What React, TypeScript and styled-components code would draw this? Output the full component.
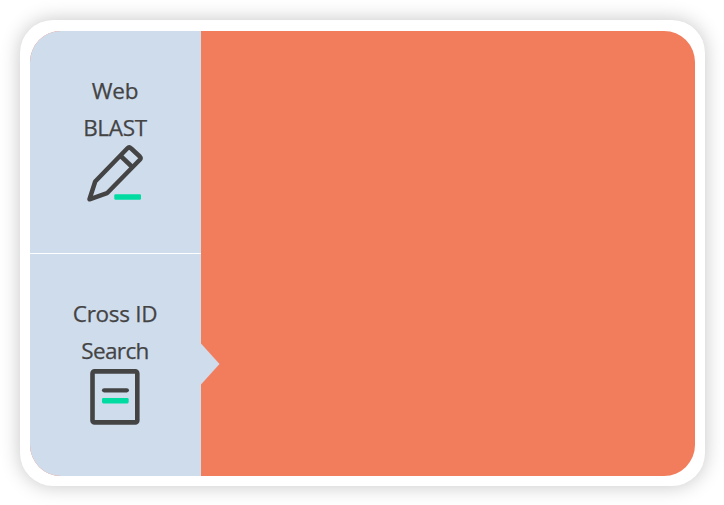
import React from 'react';
import styled, { createGlobalStyle } from 'styled-components';

const GlobalStyle = createGlobalStyle`
  * { box-sizing: border-box; }
  html, body { margin: 0; background: #fff; }
  body { overflow: hidden; }
`;

const Page = styled.main`
  width: 724px;
  height: 505px;
  padding: 20px 19px 19px 20px;
`;

const Card = styled.section`
  width: 685px;
  height: 466px;
  padding: 10.5px 10px 10.5px;
  border-radius: 33px;
  background: #fff;
  box-shadow: 0 0 20px rgba(0, 0, 0, 0.23);
`;

const Panel = styled.div`
  display: flex;
  height: 445px;
  border-radius: 31px;
  overflow: hidden;
  background: #f27d5c;
`;

const Tabs = styled.nav`
  display: flex;
  flex-direction: column;
  width: 171px;
`;

const Tab = styled.button<{ $divided?: boolean }>`
  position: relative;
  display: flex;
  flex-direction: column;
  align-items: center;
  height: ${(p) => (p.$divided ? '223px' : '222px')};
  padding: ${(p) => (p.$divided ? '41px' : '41.5px')} 1px 0 0;
  border: 0;
  border-bottom: ${(p) => (p.$divided ? '1px solid #fff' : '0')};
  background: #cfdcec;
  color: #444;
`;

const Line = styled.span<{ $spacing: number }>`
  height: 37.2px;
  font: 400 22.5px/37.2px "Open Sans", sans-serif;
  letter-spacing: ${(p) => p.$spacing}px;
  white-space: nowrap;
  -webkit-text-stroke: 0.25px #444;
`;

const Icon = styled.svg<{ $lift: number }>`
  display: block;
  width: 66px;
  height: 66px;
  margin-top: ${(p) => -p.$lift}px;
  margin-right: 1px;
  flex: none;
`;

const Arrow = styled.svg`
  position: absolute;
  left: 170.5px;
  top: 89px;
  width: 19px;
  height: 42px;
`;

const Content = styled.div`
  flex: 1;
`;

const PencilIcon = () => (
  <Icon $lift={6} viewBox="0 0 66 66" fill="none">
    <path
      d="M7.5 59.3 13.2 41.5 45.2 8.5Q47.2 6.5 49.2 8.5L57.8 16.5Q59.3 18 57.8 19.7L25 53.2Z"
      stroke="#444"
      strokeWidth="4.5"
      strokeLinejoin="round"
    />
    <path d="M38.7 16 49.7 26.5" stroke="#444" strokeWidth="4.5" />
    <rect x="32.3" y="54.2" width="26.7" height="5.6" rx="1.2" fill="#00dba2" />
  </Icon>
);

const DocumentIcon = () => (
  <Icon $lift={5} viewBox="0 0 66 66" fill="none">
    <rect x="10.5" y="7.4" width="44.8" height="51" rx="2" stroke="#444" strokeWidth="4.6" />
    <path d="M22.1 26.3H44.8" stroke="#444" strokeWidth="4.3" strokeLinecap="round" />
    <rect x="20" y="34" width="26.7" height="5.4" rx="1.4" fill="#00dba2" />
  </Icon>
);

export default function App() {
  return (
    <Page>
      <GlobalStyle />
      <Card>
        <Panel>
          <Tabs>
            <Tab $divided>
              <Line $spacing={-0.2}>Web</Line>
              <Line $spacing={-0.3}>BLAST</Line>
              <PencilIcon />
            </Tab>
            <Tab>
              <Line $spacing={-0.3}>Cross ID</Line>
              <Line $spacing={-0.65}>Search</Line>
              <DocumentIcon />
              <Arrow viewBox="0 0 19 42">
                <path d="M0 .5 18.5 21 0 41.5Z" fill="#cfdcec" />
              </Arrow>
            </Tab>
          </Tabs>
          <Content />
        </Panel>
      </Card>
    </Page>
  );
}
